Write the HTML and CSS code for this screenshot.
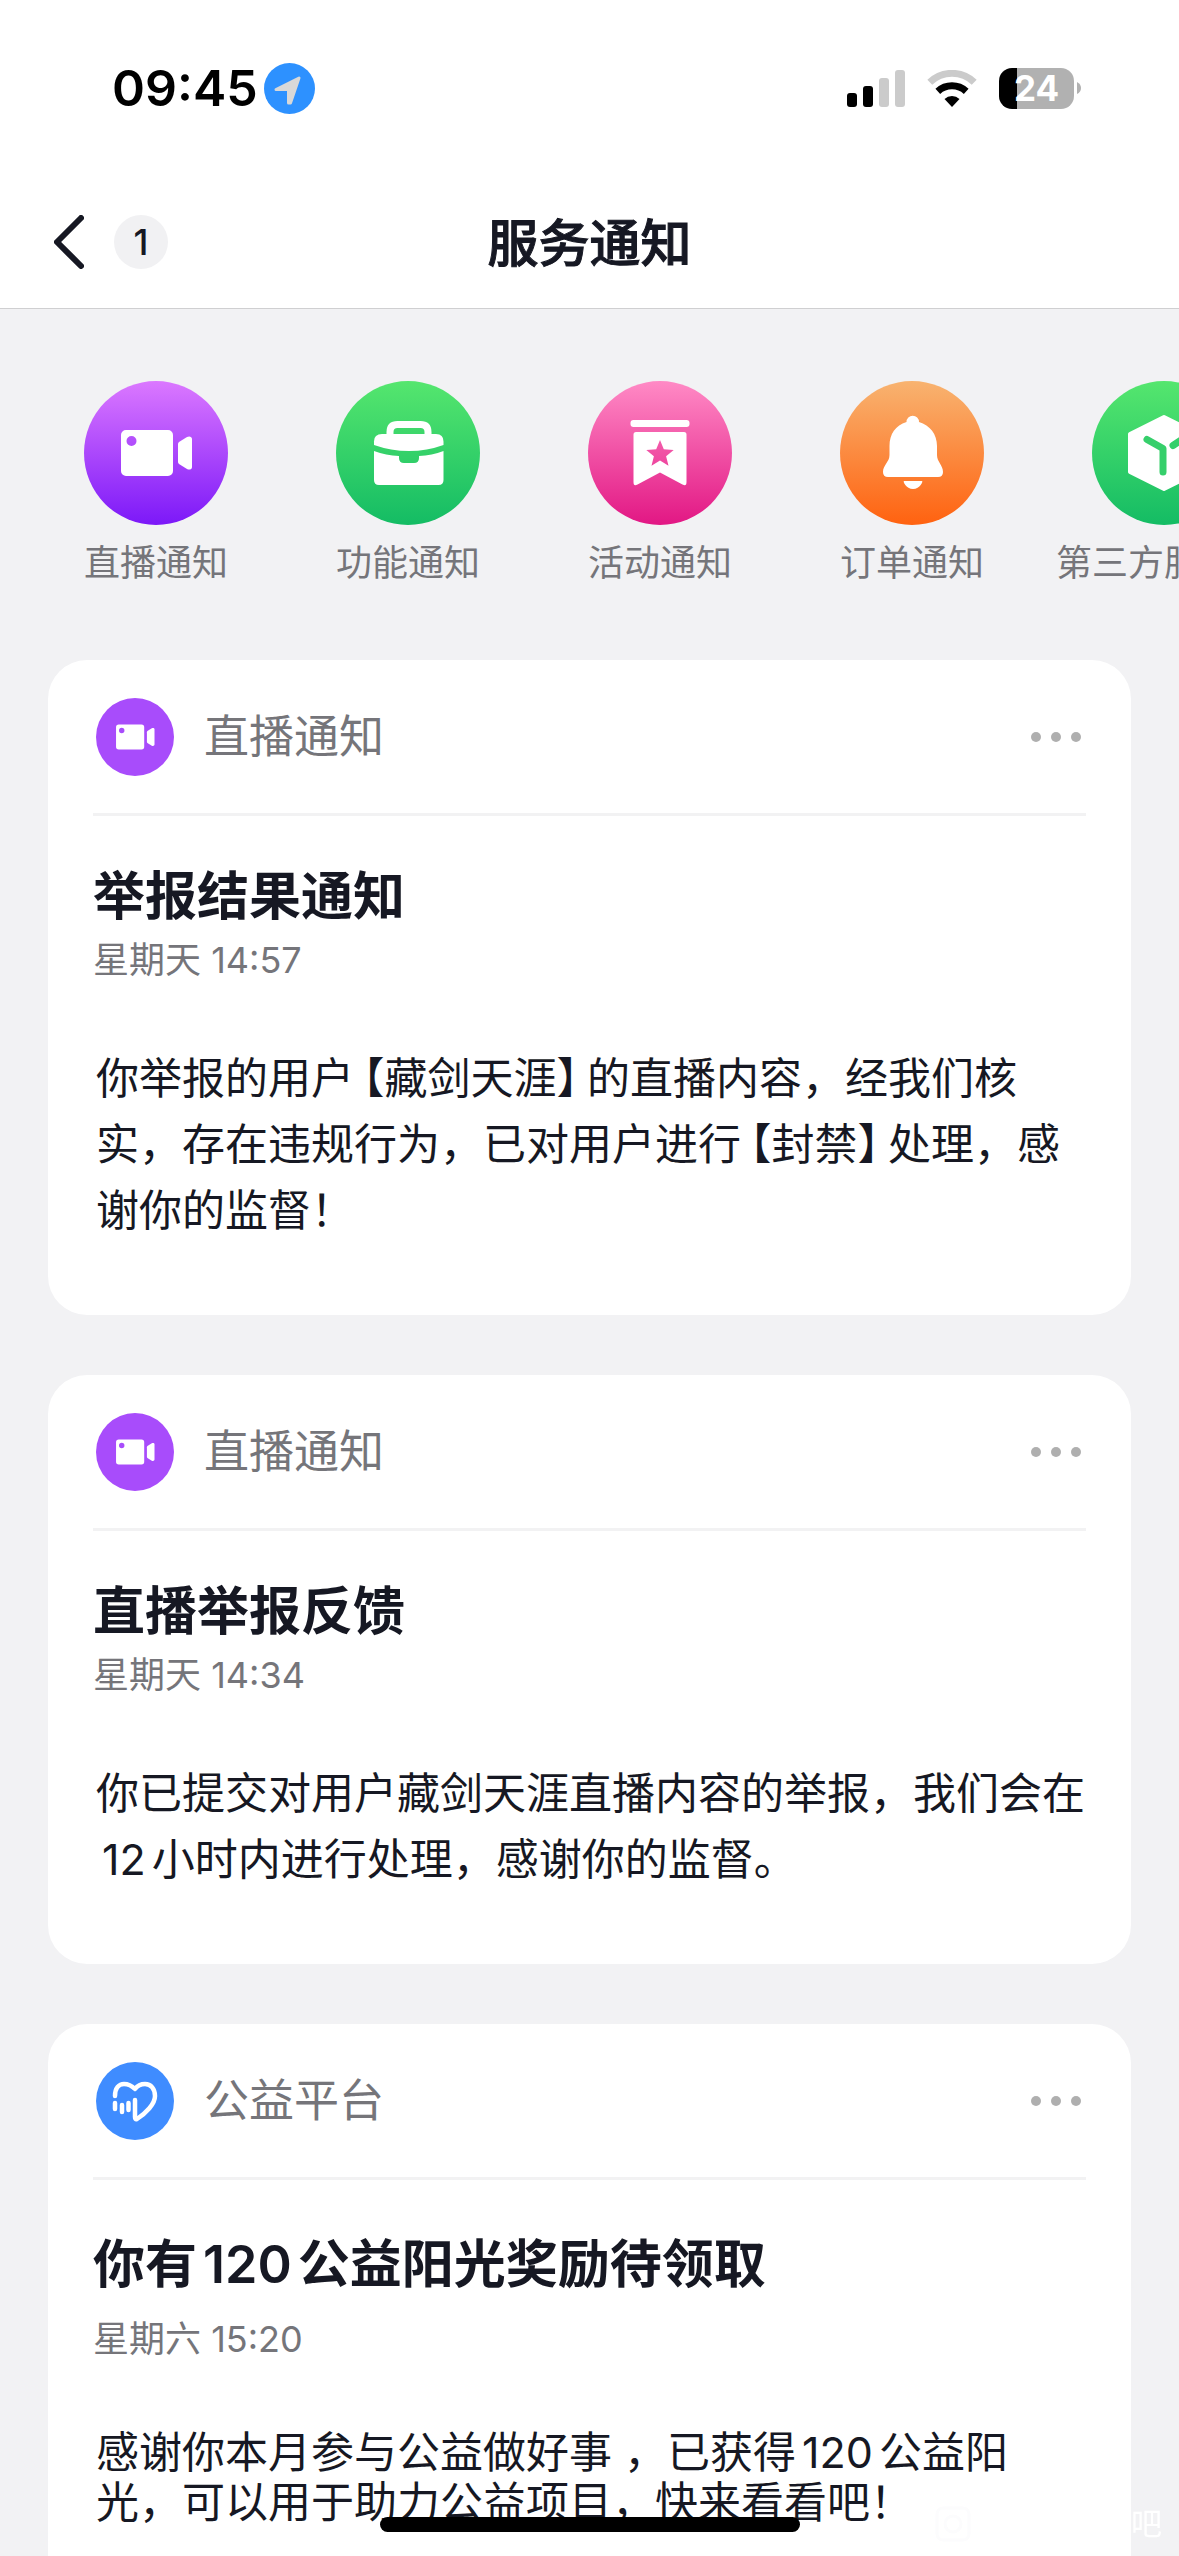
FILE: index.html
```html
<!DOCTYPE html>
<html lang="zh-CN">

<head>
    <meta charset="UTF-8">
    <meta name="viewport" content="width=device-width, initial-scale=1.0">
    <title>服务通知</title>
    <link rel="stylesheet" href="styles.css">
</head>

<body>

    <!-- Shared icons -->
    <svg class="sprite" aria-hidden="true">
        <symbol id="icon-video" viewBox="0 0 144 144">
            <path fill="currentColor" fill-rule="evenodd" d="M42 49h42a5 5 0 0 1 5 5v36a5 5 0 0 1-5 5H42a5 5 0 0 1-5-5V54a5 5 0 0 1 5-5zM47.500 55a5 5 0 1 0 0 10a5 5 0 1 0 0-10z" />
            <path fill="currentColor" d="M95 61l8-5c2-1.200 5-.600 5 2v28c0 2.600-3 3.200-5 2l-8-5q-1-1-1-2V63q0-1 1-2z" />
        </symbol>
        <symbol id="icon-more" viewBox="0 0 50 10">
            <circle cx="5" cy="5" r="5" />
            <circle cx="25" cy="5" r="5" />
            <circle cx="45" cy="5" r="5" />
        </symbol>
    </svg>

    <div class="status-bar">
        <div class="status-left">
            <span class="time">09:45</span>
            <svg class="location" viewBox="0 0 51 51">
                <circle cx="25.500" cy="25.500" r="25.500" fill="#2d91ff" />
                <path d="M35 15L26.500 40H24.500V26.500H12z" fill="#d8d8d8" stroke="#d8d8d8" stroke-width="3" stroke-linejoin="round" />
            </svg>
        </div>
        <div class="status-right">
            <svg class="signal" viewBox="0 0 58 37">
                <rect y="23" width="10" height="14" rx="3" />
                <rect x="16" y="16" width="10" height="21" rx="3" />
                <rect x="32" y="8" width="10" height="29" rx="3" fill="#cbcbcb" />
                <rect x="48" width="10" height="37" rx="3" fill="#cbcbcb" />
            </svg>
            <svg class="wifi" viewBox="0 0 50 37">
                <path d="M2.800 12.300a32 32 0 0 1 44.400 0" fill="none" stroke="#cbcbcb" stroke-width="7" />
                <path d="M10.800 21.300a21 21 0 0 1 28.400 0" fill="none" stroke="#000" stroke-width="7" />
                <path d="M25 37l-7.500-8a11 11 0 0 1 15 0z" />
            </svg>
            <div class="battery">
                <span class="battery-level">24</span>
                <svg class="battery-cap" viewBox="0 0 4 12">
                    <path d="M0 0q4 2 4 6t-4 6z" fill="#b1b1b1" />
                </svg>
            </div>
        </div>
    </div>

    <header class="nav">
        <div class="nav-left">
            <button class="back" type="button" aria-label="返回">
                <svg viewBox="0 0 30 54">
                    <path d="M27 3L3 27l24 24" fill="none" stroke="currentColor" stroke-width="6" stroke-linecap="round" stroke-linejoin="round" />
                </svg>
            </button>
            <span class="unread">1</span>
        </div>
        <h1 class="nav-title">服务通知</h1>
    </header>

    <main class="content">
        <nav class="categories">
            <a class="category" href="#live">
                <span class="category-icon purple"><svg viewBox="0 0 144 144"><use href="#icon-video" /></svg></span>
                <span>直播通知</span>
            </a>
            <a class="category" href="#feature">
                <span class="category-icon green">
                    <svg viewBox="0 0 144 144">
                        <path d="M54 56v-5q0-7.500 7.500-7.500h23q7.500 0 7.500 7.500v5" fill="none" stroke="#fff" stroke-width="7" />
                        <path fill="#fff" d="M46 53h54q7.500 0 7.500 7.500V64Q91 70 73 70T38 64v-3.500Q38 53 46 53z" />
                        <path fill="#fff" d="M38 70q12 4.500 25 5v2q0 5 5 5h10q5 0 5-5v-2q13-.500 24.500-5v29q0 5-5 5H43q-5 0-5-5z" />
                    </svg>
                </span>
                <span>功能通知</span>
            </a>
            <a class="category" href="#activity">
                <span class="category-icon pink">
                    <svg viewBox="0 0 144 144">
                        <rect x="42.500" y="39" width="59" height="7" rx="3" fill="#fff" />
                        <path fill="#fff" fill-rule="evenodd" d="M48 51h48q2.500 0 2.500 2.500V101q0 5-4 2.500L72 91.500l-22.500 12q-4 2.500-4-2.500V53.500Q45.500 51 48 51zM72 59l3.800 9.200 9.900.700-7.600 6.300 2.400 9.600-8.500-5.200-8.500 5.200 2.400-9.600-7.600-6.300 9.900-.700z" />
                    </svg>
                </span>
                <span>活动通知</span>
            </a>
            <a class="category" href="#order">
                <span class="category-icon orange">
                    <svg viewBox="0 0 144 144">
                        <path fill="#fff" d="M66.500 41a6.200 6.200 0 0 1 12.500 0C90 44.500 97 53 97 65v9c0 7 6 10 6 17q0 5-5 5H48q-5 0-5-5c0-7 6.500-10 6.500-17v-9c0-12 6-20.500 17-24z" />
                        <path fill="#fff" d="M64 100h18c1.500 0-2 8-9 8s-10.500-8-9-8z" />
                    </svg>
                </span>
                <span>订单通知</span>
            </a>
            <a class="category" href="#third-party">
                <span class="category-icon green">
                    <svg viewBox="0 0 144 144">
                        <path fill="#fff" stroke="#fff" stroke-width="4" stroke-linejoin="round" d="M72 36l34 17v38l-34 17-34-17V53z" />
                        <path d="M55 58.500l16 9V91M81 64.500L90 58.500" fill="none" stroke="#36cf6b" stroke-width="7" stroke-linecap="round" stroke-linejoin="round" />
                    </svg>
                </span>
                <span>第三方服务号</span>
            </a>
        </nav>

        <section class="card">
            <div class="card-header">
                <span class="card-icon live"><svg viewBox="0 0 144 144"><use href="#icon-video" /></svg></span>
                <span class="card-source">直播通知</span>
                <button class="more" type="button" aria-label="更多"><svg viewBox="0 0 50 10"><use href="#icon-more" /></svg></button>
            </div>
            <h2 class="card-title">举报结果通知</h2>
            <time class="card-time">星期天 14:57</time>
            <p class="card-text">你举报的用户<span class="bracket open">【</span>藏剑天涯<span class="bracket close">】</span>的直播内容，经我们核实，存在违规行为，已对用户进行<span class="bracket open">【</span>封禁<span class="bracket close">】</span>处理，感谢你的监督！</p>
        </section>

        <section class="card">
            <div class="card-header">
                <span class="card-icon live"><svg viewBox="0 0 144 144"><use href="#icon-video" /></svg></span>
                <span class="card-source">直播通知</span>
                <button class="more" type="button" aria-label="更多"><svg viewBox="0 0 50 10"><use href="#icon-more" /></svg></button>
            </div>
            <h2 class="card-title">直播举报反馈</h2>
            <time class="card-time">星期天 14:34</time>
            <p class="card-text">你已提交对用户藏剑天涯直播内容的举报，我们会在<span class="num">12</span>小时内进行处理，感谢你的监督。</p>
        </section>

        <section class="card reward">
            <div class="card-header">
                <span class="card-icon charity">
                    <svg viewBox="0 0 78 78" fill="none" stroke="currentColor" stroke-width="4.500" stroke-linecap="round" stroke-linejoin="round">
                        <path d="M19 34c0-8 4-12 9-12 5 0 8 2 11 5 3-4 7-5 10-5 6 0 10 5 10 12 0 8-9 17-18 23q-2 1-2-2V38" />
                        <path d="M19 41v6M26 43v7M32.500 41v7" />
                    </svg>
                </span>
                <span class="card-source">公益平台</span>
                <button class="more" type="button" aria-label="更多"><svg viewBox="0 0 50 10"><use href="#icon-more" /></svg></button>
            </div>
            <h2 class="card-title">你有<span class="num">120</span>公益阳光奖励待领取</h2>
            <time class="card-time">星期六 15:20</time>
            <p class="card-text">感谢你本月参与公益做好事&nbsp;，已获得<span class="num">120</span>公益阳光，可以用于助力公益项目，快来看看吧！</p>
        </section>
    </main>

    <div class="watermark">
        <svg viewBox="0 0 36 36" fill="none" stroke="#fcfcfd" stroke-width="3">
            <rect x="2" y="2" width="32" height="32" rx="6" />
            <circle cx="18" cy="18" r="8" />
        </svg>
        <span>吧</span>
    </div>
    <div class="home-indicator"></div>

</body>

</html>
```

FILE: styles.css
```css
* {
    box-sizing: border-box;
}

body {
    height: 100vh;
    margin: 0;
    display: flex;
    flex-direction: column;
    overflow: hidden;
    font-family: Inter, 'Noto Sans CJK SC', sans-serif;
    color: #161823;
    background-color: #f2f2f4;
}

button {
    display: flex;
    padding: 0;
    border: 0;
    background: none;
    color: inherit;
}

svg {
    display: block;
}

.sprite {
    position: absolute;
    width: 0;
    height: 0;
}

/* Status bar */
.status-bar {
    display: flex;
    flex: none;
    justify-content: space-between;
    align-items: center;
    height: 176px;
    padding: 0 98px 0 112px;
    background-color: #fff;
    color: #000;
}

.status-left {
    display: flex;
    align-items: center;
    gap: 6px;
}

.time {
    font-size: 50px;
    font-weight: 600;
    line-height: 60px;
}

.location {
    width: 51px;
    height: 51px;
}

.status-right {
    display: flex;
    align-items: center;
    gap: 22px;
}

.signal {
    width: 58px;
    height: 37px;
}

.wifi {
    width: 50px;
    height: 37px;
}

.battery {
    display: flex;
    align-items: center;
    gap: 3px;
}

.battery-level {
    width: 75px;
    height: 41px;
    border-radius: 13px;
    background: linear-gradient(to right, #000 24%, #b1b1b1 24%);
    color: #fff;
    font-size: 35px;
    font-weight: 700;
    line-height: 41px;
    text-align: center;
}

.battery-cap {
    width: 4px;
    height: 12px;
}

/* Navigation */
.nav {
    display: grid;
    flex: none;
    grid-template-columns: 1fr auto 1fr;
    align-items: center;
    height: 133px;
    padding: 0 54px;
    border-bottom: 1px solid #cfcfd1;
    background-color: #fff;
}

.nav-left {
    display: flex;
    align-items: center;
    gap: 30px;
}

.back svg {
    width: 30px;
    height: 54px;
}

.unread {
    width: 54px;
    height: 54px;
    border-radius: 50%;
    background-color: #f1f1f3;
    font-size: 36px;
    font-weight: 500;
    line-height: 54px;
    text-align: center;
}

.nav-title {
    margin: 0;
    padding-top: 4px;
    font-size: 51px;
    font-weight: 500;
    line-height: 60px;
    -webkit-text-stroke: 1px currentColor;
}

/* Category strip */
.content {
    flex: 1;
    min-height: 0;
    overflow-y: auto;
    scrollbar-width: none;
}

.categories {
    display: flex;
    padding: 72px 30px 75px;
    overflow-x: auto;
    scrollbar-width: none;
}

.category {
    display: flex;
    flex: none;
    flex-direction: column;
    align-items: center;
    gap: 16px;
    width: 252px;
    color: #75757a;
    font-size: 36px;
    line-height: 44px;
    text-decoration: none;
    white-space: nowrap;
}

.category-icon {
    width: 144px;
    height: 144px;
    border-radius: 50%;
    color: #fff;
}

.purple {
    background: linear-gradient(#db78ff, #7c18f8);
}

.green {
    background: linear-gradient(#55e66e, #14bc64);
}

.pink {
    background: linear-gradient(#ff8ac5, #e21784);
}

.orange {
    background: linear-gradient(#f8b370, #ff6210);
}

/* Cards */
.card {
    margin: 0 48px 60px;
    padding: 0 45px 72px;
    border-radius: 39px;
    background-color: #fff;
}

.card-header {
    display: flex;
    align-items: center;
    height: 156px;
    padding: 0 5px 0 3px;
    border-bottom: 3px solid #f2f2f3;
}

.card-icon {
    width: 78px;
    height: 78px;
    border-radius: 50%;
    color: #fff;
}

.live {
    background-color: #a84cfb;
}

.charity {
    background-color: #3f8cff;
}

.card-source {
    flex: 1;
    margin-left: 30px;
    color: #75757a;
    font-size: 45px;
    line-height: 60px;
}

.more svg {
    width: 50px;
    height: 10px;
    fill: #afafaf;
}

.card-title {
    margin: 51px 0 11px;
    font-size: 52px;
    font-weight: 600;
    line-height: 60px;
}

.card-time {
    display: block;
    color: #75757a;
    font-size: 36px;
    line-height: 44px;
}

.card-text {
    margin: 63px 0 0;
    padding-left: 3px;
    font-size: 43px;
    line-height: 66px;
}

/* Half-width lenticular brackets */
.bracket {
    font-feature-settings: 'halt';
}

.open {
    margin-left: 9px;
}

.close {
    margin-right: 9px;
}

/* Numbers set inside Chinese text */
.num {
    margin: 0 6px;
}

.reward .card-title {
    margin: 55px 0 22px;
}

.reward .card-text {
    margin-top: 66px;
    line-height: 50px;
}

/* Overlays */
.watermark {
    position: fixed;
    right: 17px;
    bottom: 14px;
    display: flex;
    align-items: center;
    gap: 160px;
    color: #fff;
    font-size: 31px;
    line-height: 36px;
}

.watermark svg {
    width: 36px;
    height: 36px;
}

.home-indicator {
    position: fixed;
    bottom: 24px;
    left: 50%;
    width: 420px;
    height: 15px;
    margin-left: -210px;
    border-radius: 8px;
    background-color: #000;
}
```
